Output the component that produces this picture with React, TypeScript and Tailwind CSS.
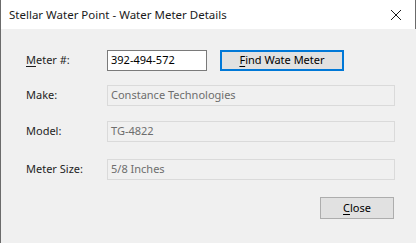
import React from 'react'

const font = { fontFamily: '"Segoe UI", "Noto Sans", "Open Sans", sans-serif' }

function Field({ label, value, top }: { label: string; value: string; top: string }) {
  return (
    <div className={`flex h-[21px] items-center ${top}`}>
      <span className="w-[106px] shrink-0 whitespace-nowrap pl-[25px] text-[11px] text-[#1e1e1e]">{label}</span>
      <div className="flex h-[21px] w-[288px] shrink-0 items-center whitespace-nowrap border border-[#dadada] bg-[#f0f0f0] px-[3px] text-[11px] text-[#6d6d6d]">
        {value}
      </div>
    </div>
  )
}

export default function App() {
  return (
    <div style={font} className="flex h-[243px] w-[416px] flex-col border-l border-[#6b6b6b] bg-white">
      {/* Title bar */}
      <div className="flex h-[29px] items-center justify-between border-r border-[#6b6b6b] bg-white pl-[8px] pr-[9px]">
        <span className="text-[11.5px] text-[#1a1a1a]">Stellar Water Point - Water Meter Details</span>
        <svg width="12" height="12" viewBox="0 0 12 12" className="mr-[4px]">
          <path d="M1 1 L11 11 M11 1 L1 11" stroke="#1a1a1a" strokeWidth="1" />
        </svg>
      </div>

      {/* Body */}
      <div className="flex flex-1 flex-col bg-[#f0f0f0] pt-[21px]">
        <div className="flex h-[21px] items-center">
          <span className="w-[106px] shrink-0 whitespace-nowrap pl-[25px] text-[11px] text-[#1e1e1e]">
            <span className="underline underline-offset-2">M</span>eter #:
          </span>
          <div className="flex h-[21px] w-[100px] shrink-0 items-center border border-[#7a7a7a] bg-white px-[3px] text-[11px] text-black">
            392-494-572
          </div>
          <button className="ml-[13px] flex h-[21px] w-[124px] shrink-0 items-center justify-center border-2 border-[#0078d7] bg-[#e1e1e1] text-[11px] text-black">
            <span className="underline underline-offset-2">F</span>ind Wate Meter
          </button>
        </div>

        <Field label="Make:" value="Constance Technologies" top="mt-[14px]" />
        <Field label="Model:" value="TG-4822" top="mt-[15px]" />
        <Field label="Meter Size:" value="5/8 Inches" top="mt-[17px]" />

        <div className="mt-[17px] flex">
          <button className="ml-[319px] flex h-[22px] w-[74px] items-center justify-center border border-[#adadad] bg-[#e1e1e1] text-[11px] text-black">
            <span className="underline underline-offset-2">C</span>lose
          </button>
        </div>
      </div>
    </div>
  )
}
